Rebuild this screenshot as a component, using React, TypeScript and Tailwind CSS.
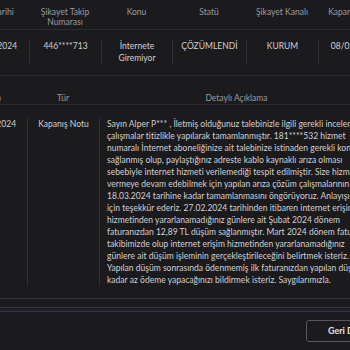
import React from "react";

const lines = [
  "Sayın Alper P*** , İletmiş olduğunuz talebinizle ilgili gerekli incelemeler ve",
  "çalışmalar titizlikle yapılarak tamamlanmıştır. 181****532 hizmet",
  "numaralı İnternet aboneliğinize ait talebinize istinaden gerekli kontroller",
  "sağlanmış olup, paylaştığınız adreste kablo kaynaklı arıza olması",
  "sebebiyle internet hizmeti verilemediği tespit edilmiştir. Size hizmet",
  "vermeye devam edebilmek için yapılan arıza çözüm çalışmalarının",
  "18.03.2024 tarihine kadar tamamlanmasını öngörüyoruz. Anlayışınız",
  "için teşekkür ederiz. 27.02.2024 tarihinden itibaren internet erişim",
  "hizmetinden yararlanamadığınız günlere ait Şubat 2024 dönem",
  "faturanızdan 12,89 TL düşüm sağlanmıştır. Mart 2024 dönem faturanız",
  "takibimizde olup internet erişim hizmetinden yararlanamadığınız",
  "günlere ait düşüm işleminin gerçekleştirileceğini belirtmek isteriz.",
  "Yapılan düşüm sonrasında ödenmemiş ilk faturanızdan yapılan düşüm",
  "kadar az ödeme yapacağınızı bildirmek isteriz. Saygılarımızla.",
];

export default function App() {
  return (
    <div className="w-[350px] h-[350px] overflow-hidden bg-[#1b1b1e] font-[Lato,sans-serif] text-[8.5px] tracking-[0.02px]">
      <div className="ml-[-43px] w-[520px] pt-[1px]">
        {/* Table 1 header */}
        <div className="grid grid-cols-[72px_72px_71px_74px_72px_72px] border-b border-[#2b2b30] pt-[6px] pb-[2px] leading-[10px] text-[#9a9a9e] text-center">
          <div className="whitespace-nowrap">Kayıt Tarihi</div>
          <div>Şikayet Takip<br />Numarası</div>
          <div>Konu</div>
          <div>Statü</div>
          <div className="whitespace-nowrap">Şikayet Kanalı</div>
          <div className="whitespace-nowrap">Kapanış Tarihi</div>
        </div>
        {/* Table 1 row */}
        <div className="grid grid-cols-[72px_72px_71px_74px_72px_72px] border-b border-[#2b2b30] pt-[10px] pb-[11px] leading-[12px] text-[#d0d0d2] text-center">
          <div className="border-l border-[#2f2f34] whitespace-nowrap">05/02/2024</div>
          <div className="border-l border-[#2f2f34]">446****713</div>
          <div className="border-l border-[#2f2f34]">İnternete<br />Giremiyor</div>
          <div className="border-l border-[#2f2f34]">ÇÖZÜMLENDİ</div>
          <div className="border-l border-[#2f2f34]">KURUM</div>
          <div className="border-l border-[#2f2f34] whitespace-nowrap">08/02/2024</div>
        </div>

        {/* Table 2 header */}
        <div className="mt-[10px] grid grid-cols-[70px_72px_275px] border-b border-[#2b2b30] pt-[7px] pb-[1px] leading-[10px] text-[#9a9a9e] text-center">
          <div>Tarih</div>
          <div>Tür</div>
          <div>Detaylı Açıklama</div>
        </div>
        {/* Table 2 row */}
        <div className="grid grid-cols-[70px_72px_275px] border-b border-[#34343a] pt-[13px] pb-[12px] leading-[12px] text-[#d0d0d2]">
          <div className="border-l border-[#2f2f34] text-center whitespace-nowrap">08/02/2024</div>
          <div className="border-l border-[#2f2f34] text-center whitespace-nowrap">Kapanış Notu</div>
          <div className="border-l border-[#2f2f34] pl-[7px] whitespace-nowrap">
            {lines.map((l, i) => (
              <div key={i}>{l}</div>
            ))}
          </div>
        </div>
      </div>

      {/* scroll band */}
      <div className="mt-[8px] h-[5px] border-y border-[#36334a] bg-[#1f1e26]" />

      {/* button */}
      <div className="w-[400px] flex justify-end mt-[8px] pr-[14px]">
        <button className="h-[22px] w-[80px] rounded-[3px] border border-[#58585c] bg-[#1b1b1e] text-[#e2e2e4] text-[9px] font-bold tracking-normal">
          Geri Dön
        </button>
      </div>
    </div>
  );
}
